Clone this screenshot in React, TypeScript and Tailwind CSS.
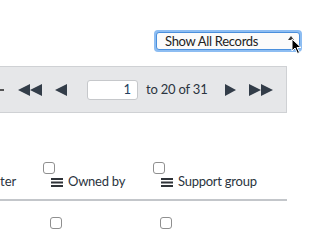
import type { ReactNode } from "react";

const iconColor = "#333d49";

function Tri({ dir, w = 12 }: { dir: "left" | "right"; w?: number }) {
  return (
    <svg width={w} height="12" viewBox={`0 0 ${w} 12`}>
      {dir === "left" ? (
        <polygon points={`${w},0 ${w},12 0,6`} fill={iconColor} />
      ) : (
        <polygon points={`0,0 0,12 ${w},6`} fill={iconColor} />
      )}
    </svg>
  );
}

function Box() {
  return (
    <span className="block w-[12px] h-[12px] rounded-[3px] border border-[#8f8f8f] bg-white" />
  );
}

function Bars() {
  return (
    <svg width="12" height="9" viewBox="0 0 12 9" className="shrink-0">
      <rect x="0" y="0" width="12" height="2" fill="#2f3338" />
      <rect x="0" y="3.5" width="12" height="2" fill="#2f3338" />
      <rect x="0" y="7" width="12" height="2" fill="#2f3338" />
    </svg>
  );
}

function HeaderCol({ children }: { children: ReactNode }) {
  return (
    <div className="w-[110px] flex flex-col">
      <Box />
      <div className="flex items-center gap-[5px] pl-[8px] h-[16px]">
        <Bars />
        <span className="whitespace-nowrap tracking-[-0.25px]">{children}</span>
      </div>
    </div>
  );
}

export default function App() {
  return (
    <div
      className="relative w-[320px] h-[240px] bg-white overflow-hidden text-[13px] text-[#2b3440]"
      style={{ fontFamily: "Lato, 'Open Sans', sans-serif" }}
    >
      {/* record filter */}
      <div className="h-[66px] pt-[30px] pl-[154px]">
        <div className="w-[148px] h-[22px] rounded-[4px] bg-[#8dbdf2] p-[2px]">
          <div className="h-full rounded-[3px] border border-[#4a8fdc] bg-[#fbfbfb] flex items-center pl-[8px] pr-[4px] text-[#222]">
            <span className="flex-1 leading-none tracking-[-0.3px]">Show All Records</span>
            <svg width="6" height="4" viewBox="0 0 6 4" className="mb-[6px] mr-[1px]">
              <polygon points="3,0 6,4 0,4" fill="#333" />
            </svg>
          </div>
        </div>
      </div>

      {/* pager */}
      <div className="w-[287px] h-[47px] bg-[#e6e7e9] border border-l-0 border-[#cfd1d4] flex items-center">
        <span className="w-[4px] h-[2px] bg-[#555] mr-[14px]" />
        <span className="flex">
          <Tri dir="left" />
          <Tri dir="left" />
        </span>
        <span className="ml-[13px]">
          <Tri dir="left" />
        </span>
        <div className="ml-[20px] w-[51px] h-[20px] bg-white border border-[#c6c8cb] rounded-[3px] flex items-center justify-end pr-[6px] text-[#24405e]">
          1
        </div>
        <span className="ml-[8px] w-[58px] whitespace-nowrap tracking-[-0.2px]">to 20 of 31</span>
        <span className="ml-[21px]">
          <Tri dir="right" w={11} />
        </span>
        <span className="ml-[13px] flex">
          <Tri dir="right" />
          <Tri dir="right" />
        </span>
      </div>

      {/* table header */}
      <div className="w-[287px] pt-[49px] pb-[9px] border-b-2 border-[#c3c6ca] flex items-end">
        <div className="w-[43px] h-[16px] flex items-center">ter</div>
        <HeaderCol>Owned by</HeaderCol>
        <HeaderCol>Support group</HeaderCol>
      </div>

      {/* first row */}
      <div className="flex pt-[16px] pl-[50px] gap-[98px]">
        <Box />
        <Box />
      </div>

      {/* mouse pointer */}
      <svg
        width="12"
        height="17"
        viewBox="0 0 12 17"
        className="absolute left-[291px] top-[38px]"
      >
        <path
          d="M1 1 L1 13 L4 10 L6.5 15.5 L8.5 14.5 L6 9.5 L10 9.5 Z"
          fill="#000"
          stroke="#fff"
          strokeWidth="1"
          strokeLinejoin="round"
        />
      </svg>
    </div>
  );
}
